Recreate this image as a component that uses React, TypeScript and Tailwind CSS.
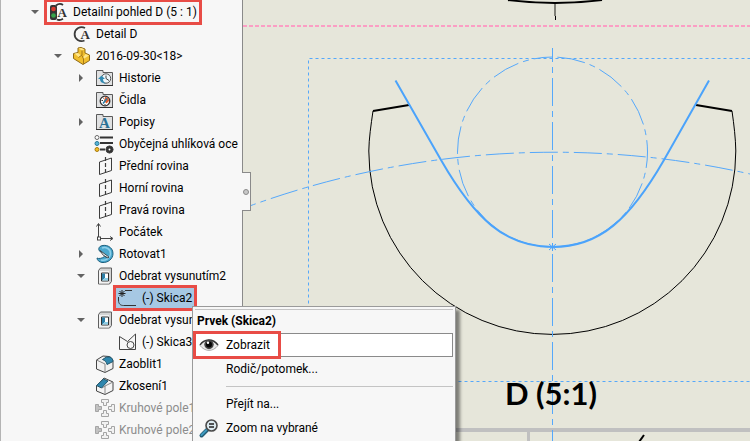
/**
 * Drawing view: feature tree, sheet canvas and context menu
 */
import { useState } from 'react'
import type { ReactNode } from 'react'

type IconName =
  | 'view' | 'detail' | 'part' | 'history' | 'sensors' | 'notes' | 'material' | 'plane'
  | 'origin' | 'revolve' | 'cut' | 'sketchActive' | 'sketch' | 'fillet' | 'chamfer' | 'pattern'

interface TreeItem {
  label: string
  icon: IconName
  level: number
  arrow?: 'open' | 'closed'
  marked?: boolean
  muted?: boolean
}

const items: TreeItem[] = [
  { label: 'Detailní pohled D (5 : 1)', icon: 'view', level: 0, arrow: 'open', marked: true },
  { label: 'Detail D', icon: 'detail', level: 1 },
  { label: '2016-09-30<18>', icon: 'part', level: 1, arrow: 'open' },
  { label: 'Historie', icon: 'history', level: 2, arrow: 'closed' },
  { label: 'Čidla', icon: 'sensors', level: 2 },
  { label: 'Popisy', icon: 'notes', level: 2, arrow: 'closed' },
  { label: 'Obyčejná uhlíková oce', icon: 'material', level: 2 },
  { label: 'Přední rovina', icon: 'plane', level: 2 },
  { label: 'Horní rovina', icon: 'plane', level: 2 },
  { label: 'Pravá rovina', icon: 'plane', level: 2 },
  { label: 'Počátek', icon: 'origin', level: 2 },
  { label: 'Rotovat1', icon: 'revolve', level: 2, arrow: 'closed' },
  { label: 'Odebrat vysunutím2', icon: 'cut', level: 2, arrow: 'open' },
  { label: '(-) Skica2', icon: 'sketchActive', level: 3, marked: true },
  { label: 'Odebrat vysunutím3', icon: 'cut', level: 2, arrow: 'open' },
  { label: '(-) Skica3', icon: 'sketch', level: 3 },
  { label: 'Zaoblit1', icon: 'fillet', level: 2 },
  { label: 'Zkosení1', icon: 'chamfer', level: 2 },
  { label: 'Kruhové pole1', icon: 'pattern', level: 2, muted: true },
  { label: 'Kruhové pole2', icon: 'pattern', level: 2, muted: true },
]

const indents = ['pl-[26px]', 'pl-[49px]', 'pl-[72px]', 'pl-[95px]']

const folder = (
  <>
    <path d="M1.500 16.500V1.500H8v2h9.500v13z" fill="#e0e1e2" stroke="#5a5a5a" />
    <path d="M1 16.500h17" stroke="#333" />
  </>
)

const icons: Record<IconName, ReactNode> = {
  view: (
    <>
      <path d="M7 2.500C9.500 .5 12 .5 14 2M8 16.500c2 1 4 .5 6-.8" fill="none" stroke="#333" strokeWidth="1.800" />
      <rect x="1" y="2" width="7" height="15" rx="2" fill="#353535" />
      <circle cx="4.500" cy="6" r="2.300" fill="#d8392f" />
      <circle cx="4.500" cy="12.500" r="2.300" fill="#38a34a" />
      <text x="8.500" y="14" fontSize="13" fontWeight="700" fontFamily="Liberation Serif, serif" fill="#333">A</text>
    </>
  ),
  detail: (
    <>
      <path d="M13 3A7 7 0 1 0 12.500 15.500" fill="none" stroke="#3c3c3c" strokeWidth="1.800" />
      <text x="8.500" y="14" fontSize="13" fontWeight="700" fontFamily="Liberation Serif, serif" fill="#333">A</text>
    </>
  ),
  part: (
    <>
      <path d="M6 1l3-.5 4 1.500V6l4.500 2v5.500L11 17.500 1.500 11.500V6.500L6 5.500z" fill="#f0be2e" stroke="#8f6a17" />
      <path d="M6.500 1.500L9 1l3.500 1.200L10 3.500zM2.500 6.500L6 6l3 2.500-2.500 1.500zM11 10.500L13.500 7l3.500 1.500-5.500 3.500z" fill="#ffe68a" />
      <path d="M10 3.500V8L6.500 10.500M10 8.500l1.500 3.500v5" fill="none" stroke="#a57818" />
    </>
  ),
  history: (
    <>
      {folder}
      <circle cx="11" cy="9.500" r="4.700" fill="#edf6fa" stroke="#555" />
      <path d="M11 6.500v3l3 2" fill="none" stroke="#444" />
      <path d="M3 10l3.500-3.500L10 10H8c0 2 1 3.500 3 4.500-3.500 0-6-1.500-6-4.500z" fill="#318ab2" />
    </>
  ),
  sensors: (
    <>
      {folder}
      <circle cx="10" cy="10" r="4.800" fill="#fff" stroke="#333" strokeWidth="1.300" />
      <path d="M10 6a4 4 0 0 1 4 4l-2.500 2.500L9 10z" fill="#e65c2b" />
      <path d="M8 12.500L12 7.500" stroke="#267fa9" strokeWidth="1.600" />
      <path d="M6.500 9.500h1.500M8 6.500l.5 1M10 14v-1" stroke="#333" />
    </>
  ),
  notes: (
    <>
      {folder}
      <text x="4" y="15" fontSize="15" fontWeight="700" fontFamily="Liberation Serif, serif" fill="#2a7195">A</text>
    </>
  ),
  material: (
    <>
      <path d="M5 2.500h13M5 8h13M5 14.500h5" stroke="#333" strokeWidth="2" />
      <circle cx="2" cy="2.500" r="2" fill="#fff" stroke="#666" />
      <circle cx="2" cy="8.500" r="2" fill="#58b5d7" stroke="#287898" />
      <circle cx="2" cy="14.500" r="2" fill="#f3bd24" stroke="#a87c12" />
      <path d="M14.500 10.500v8M10.500 14.500h8M11.700 11.700l5.600 5.600M17.300 11.700l-5.600 5.600" stroke="#333" strokeWidth="2" />
      <circle cx="14.500" cy="14.500" r="2.200" fill="#fff" stroke="#333" strokeWidth="2.500" />
    </>
  ),
  plane: (
    <>
      <path d="M4.500 5l12-4v12.500l-12 4z" fill="none" stroke="#3d3d3d" />
      <path d="M10.500 0v18" stroke="#3d3d3d" strokeWidth="1.200" strokeDasharray="4 2" />
    </>
  ),
  origin: (
    <>
      <path d="M3.500 14V1M5 15.500h12M1.500 3.500l2-3 2 3M15 13.500l3 2-3 2" fill="none" stroke="#444" />
      <rect x="2.500" y="14" width="3" height="3" fill="#fff" stroke="#444" />
    </>
  ),
  revolve: (
    <>
      <path d="M5 1.500C10-1.500 18 1.500 18 8.500c0 5.500-5 9.500-11 9-3-.5-5-2.500-5-4.500 1.500 1 5 .5 7.500-1.500l4 2L4 5.500C3.500 3.500 4 2.500 5 1.500z" fill="#4aa8ce" stroke="#1f617f" />
      <path d="M7 3C11 1.500 15.500 4 15.500 8.500c0 4.500-5 7.500-9.500 6.500" fill="none" stroke="#8fd0ea" strokeWidth="1.500" />
      <path d="M5 5.500l9 6.500-1 1-5-3z" fill="#e8f5fa" stroke="#333" strokeWidth=".8" />
    </>
  ),
  cut: (
    <>
      <path d="M3.500 3.500L5.500 1h11v13.500l-2 2.500h-11z" fill="#d4d4d4" stroke="#5f5f5f" />
      <path d="M4 4h10v12.500H4z" fill="#f3f3f3" />
      <path d="M6.500 6h7v8h-7z" fill="#fff" stroke="#333" />
      <path d="M7 6.500h3V11l-3 2.500z" fill="#2b7fa8" />
      <path d="M7 13.500L10 11h3v2.500z" fill="#8ccde6" />
    </>
  ),
  sketchActive: (
    <>
      <path d="M7 1.500h7M.5 8v3c0 4 2 5.500 5 5.500H18" fill="none" stroke="#333" />
      <path d="M4 1v7M.5 4.500h7M1.500 2l5 5M6.500 2l-5 5" stroke="#222" />
    </>
  ),
  sketch: (
    <>
      <path d="M1.500 16.500V3.500l8 5L17.500 1v15.500z" fill="none" stroke="#444" />
      <circle cx="12.500" cy="12" r="3.500" fill="#f7f7f7" stroke="#444" />
    </>
  ),
  fillet: (
    <>
      <path d="M1.500 5L8 1l6 .5c2.500 1 4 3 4 5V13.500L10 17.500 1.500 14z" fill="#f1f1f1" stroke="#444" />
      <path d="M1.500 5L10 9v8.500" fill="none" stroke="#888" />
      <path d="M7.500 4.500L11.500 2H15c2 1 3 2.500 3 4.500L12 9.500C11.500 7 10 5.500 7.500 4.500z" fill="#2f87ae" stroke="#23576d" />
    </>
  ),
  chamfer: (
    <>
      <path d="M1.500 9L9 1l9 4v8.500L10 17.500 1.500 14z" fill="#f4f4f4" stroke="#444" />
      <path d="M10 17.500V9L18 5M10 9L7 11" fill="none" stroke="#888" />
      <path d="M1.500 8.500L8.500 2 13 4 6.500 11z" fill="#2f87ae" stroke="#23576d" />
    </>
  ),
  pattern: (
    <g fill="#f2f2f2" stroke="#a5a5a5">
      <path d="M6.500 .5h7v3h-2v3h-3v-3h-2zM6.500 17.500h7v-3h-2v-3h-3v3h-2zM19.500 5.500v7h-3v-2h-3v-3h3v-2z" />
      <path d="M.5 5.500v7h3v-2h3v-3h-3v-2z" fill="#c2c2c2" />
    </g>
  ),
}

function Icon({ name }: { name: IconName }) {
  return (
    <svg className="size-[18px] shrink-0 overflow-visible" viewBox="0 0 18 18" aria-hidden="true">
      {icons[name]}
    </svg>
  )
}

function TreeRow({ item, selected, onSelect }: { item: TreeItem; selected: boolean; onSelect: () => void }) {
  return (
    <li className={`flex h-[22px] items-center gap-[3px] ${indents[item.level]}`}>
      <span className="flex w-4 shrink-0 justify-center">
        {item.arrow && (
          <svg className="size-2" viewBox="0 0 8 8" aria-hidden="true">
            <path d={item.arrow === 'open' ? 'M0 2h8L4 6z' : 'M2 0l4 4-4 4z'} fill="#636363" />
          </svg>
        )}
      </span>
      <button
        type="button"
        onClick={onSelect}
        className={`flex h-full items-center gap-1.5 whitespace-nowrap px-[3px] text-left
          ${item.marked ? 'outline-3 -outline-offset-1 outline-[#e84c46]' : ''}
          ${selected ? 'bg-[#a6c8e3]' : ''}
          ${item.muted ? 'text-[#8c8c8c]' : 'text-black'}`}
      >
        <Icon name={item.icon} />
        {item.label}
      </button>
    </li>
  )
}

function Sheet() {
  return (
    <svg className="h-full w-full" viewBox="243 0 507 441" preserveAspectRatio="xMinYMin slice">
      {/* Sheet lines */}
      <path d="M243 26h507" stroke="#fb9ec4" strokeWidth="2" strokeDasharray="4 2" />
      <path d="M400 430h350" stroke="#c0c0c0" strokeWidth="4" />
      <path d="M528.500 432v9" stroke="#c0c0c0" strokeWidth="3" />
      <path d="M555 3v13" stroke="#808078" strokeWidth="2" />
      <path d="M508 0q47 6 94 0" fill="none" stroke="#000" strokeWidth="2" />
      <path d="M555.500 16v4" stroke="#000" />
      <path d="M639 442l5-7" stroke="#000" strokeWidth="2" />

      {/* View border */}
      <path d="M308.500 381.500V58.500H750M308.500 381.500H750" fill="none" stroke="#55a8fb" strokeDasharray="3 3" />

      {/* Part outline */}
      <path d="M373 111C371 125 369 138 368.800 151A183.500 183.500 0 0 0 735.800 151C735.600 138 734 125 732 111" fill="none" stroke="#000" />
      <path d="M373 111l36-6M732 111l-36-6" stroke="#000" strokeWidth="2" />

      {/* Construction geometry */}
      <g fill="none" stroke="#55a8fb" strokeDasharray="28 5 6 5">
        <path d="M552.500 48v393" strokeDashoffset="14" />
        <path d="M251 205.500A890 890 0 0 1 750 174" strokeDashoffset="23" />
        <path d="M552.500 57a95 95 0 0 1 0 190a95 95 0 0 1 0 -190" strokeDashoffset="-5" />
      </g>

      {/* Sketch profile */}
      <path d="M395.500 80.500L441 160C475 219 505 247 552.500 247S630 219 664 160L709 80.500" fill="none" stroke="#4ba3fb" strokeWidth="2" />
      <path d="M552.500 243v8M549 244l7 6M556 244l-7 6" stroke="#4ba3fb" />

      <text x="505" y="405" fontSize="31" fontWeight="700" fontFamily="Lato, sans-serif">D (5:1)</text>
    </svg>
  )
}

function ContextMenu() {
  return (
    <div
      role="menu"
      className="absolute left-48 top-[306px] w-[264px] border border-[#9a9a9a] bg-[#f7f7f7] px-0.5 pb-6 pt-0.5 shadow-[4px_4px_3px_rgba(0,0,0,0.45)]"
    >
      <div className="border-t border-[#c4c4c4] px-0.5 font-bold leading-[23px]">Prvek (Skica2)</div>
      <button
        type="button"
        role="menuitem"
        className="relative flex h-6 w-full items-center border border-[#8a8a8a] bg-white text-left"
      >
        <span className="flex h-full items-center gap-2 px-1 pr-2 outline-3 outline-[#e84c46]">
          <svg className="h-4 w-[18px] overflow-visible" viewBox="0 0 18 16" aria-hidden="true">
            <path d="M0 8.500C4 2 13 1 18 8.500 13 15 5 15 0 8.500z" fill="#e9e9e9" stroke="#aaa" />
            <path d="M0 8C4 1.500 13 1 18 8" fill="none" stroke="#333" strokeWidth="1.400" />
            <circle cx="9" cy="7.500" r="4.700" fill="#444" />
            <circle cx="9" cy="7.500" r="3" fill="#050505" />
            <circle cx="8" cy="5.800" r="1.200" fill="#fff" />
          </svg>
          Zobrazit
        </span>
      </button>
      <button type="button" role="menuitem" className="flex h-6 w-full items-center pl-[31px] text-left">
        Rodič/potomek...
      </button>
      <div role="separator" className="my-[5px] ml-[31px] border-t border-[#c4c4c4]" />
      <button type="button" role="menuitem" className="flex h-6 w-full items-center pl-[31px] text-left">
        Přejít na...
      </button>
      <button type="button" role="menuitem" className="flex h-6 w-full items-center gap-2 pl-[5px] text-left">
        <svg className="size-[18px] overflow-visible" viewBox="0 0 18 18" aria-hidden="true">
          <path d="M1.500 16.500L7 11" stroke="#235b73" strokeWidth="4" strokeLinecap="round" />
          <path d="M1.500 16L6.500 11" stroke="#3e9bc0" strokeWidth="2" strokeLinecap="round" />
          <circle cx="11.500" cy="6.500" r="5.500" fill="#dceaf0" stroke="#4b4b4b" strokeWidth="1.600" />
          <path d="M9 5h5M9 8h5" stroke="#222" strokeWidth="1.500" />
        </svg>
        Zoom na vybrané
      </button>
    </div>
  )
}

export default function App() {
  const [selected, setSelected] = useState(13)

  return (
    <div className="relative flex h-screen overflow-hidden bg-[#e6e6da] font-[Roboto,'Noto_Sans',sans-serif] text-xs text-black">
      {/* Feature tree */}
      <nav className="relative w-[243px] shrink-0 border-l border-r border-l-[#b4b4b4] border-r-[#8a8a8a] bg-[#f7f7f7]">
        <ul className="mr-0.5 overflow-hidden pt-px">
          {items.map((item, i) => (
            <TreeRow key={item.label} item={item} selected={selected === i} onSelect={() => setSelected(i)} />
          ))}
        </ul>
        <button
          type="button"
          aria-label="Panel"
          className="absolute -right-[9px] top-[172px] flex h-[39px] w-[9px] items-center justify-center border border-l-0 border-[#8a8a8a] bg-[#f7f7f7]"
        >
          <span className="size-1.5 rounded-full border border-[#8a8a8a] bg-[#c8c8c8]" />
        </button>
      </nav>

      {/* Drawing sheet */}
      <main className="min-w-0 flex-1">
        <Sheet />
      </main>

      <ContextMenu />
    </div>
  )
}
